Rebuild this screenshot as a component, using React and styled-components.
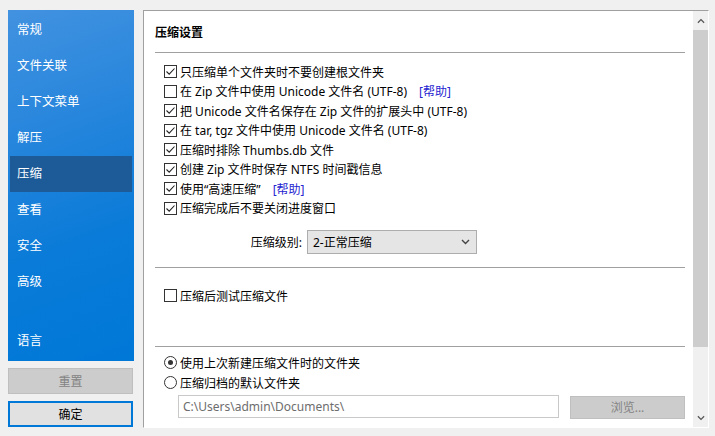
import React from 'react'
import styled, { createGlobalStyle } from 'styled-components'

const GlobalStyle = createGlobalStyle`
    body {
        margin: 0;
        background: #f0f0f0;
        font-family: "Noto Sans", "Noto Sans CJK SC", sans-serif;
        font-size: 12px;
        color: #000;
    }
`

const Window = styled.div`
    box-sizing: border-box;
    display: flex;
    width: 715px;
    height: 436px;
    padding: 10px 6px 8px 8px;
    background: #f0f0f0;
`

const LeftCol = styled.div`
    display: flex;
    flex-direction: column;
    width: 126px;
`

const Sidebar = styled.nav`
    display: flex;
    flex-direction: column;
    height: 351px;
    padding: 2px 2px 2px;
    box-sizing: border-box;
    background: linear-gradient(160deg, #4292e0 0%, #2585dc 35%, #0a7bd8 65%, #0078d7 100%);
`

const NavItem = styled.div`
    height: 36px;
    line-height: 36px;
    padding-left: 7px;
    color: #fff;
    font-size: 12.5px;
    background: ${p => (p.active ? '#1d5b98' : 'transparent')};
    margin-top: ${p => (p.push ? 'auto' : '0')};
`

const SideButton = styled.button`
    box-sizing: border-box;
    height: 26px;
    margin-top: 7px;
    width: 125px;
    font-family: inherit;
    font-size: 12px;
    background: ${p => (p.primary ? '#e1e1e1' : '#cccccc')};
    border: ${p => (p.primary ? '2px solid #0078d7' : '1px solid #bfbfbf')};
    color: ${p => (p.primary ? '#000' : '#838383')};
    padding: 0;
`

const Panel = styled.section`
    box-sizing: border-box;
    display: flex;
    width: 566px;
    height: 418px;
    margin-left: 9px;
    border-top: 1px solid #a0a0a0;
    border-left: 1px solid #a0a0a0;
    border-right: 1px solid #fff;
    border-bottom: 1px solid #fff;
    background: #fff;
`

const Content = styled.div`
    flex: 1;
    padding: 0 8px 0 11px;
`

const Title = styled.div`
    font-weight: 700;
    line-height: 16px;
    padding: 14px 0 11px;
    border-bottom: 1px solid #a0a0a0;
`

const Group = styled.div`
    padding-left: 9px;
    margin-top: ${p => p.top || 0}px;
`

const Row = styled.div`
    display: flex;
    align-items: center;
    height: ${p => p.h || 19.5}px;
    white-space: nowrap;
`

const Box = styled.span`
    box-sizing: border-box;
    display: inline-flex;
    align-items: center;
    justify-content: center;
    width: 13px;
    height: 13px;
    border: 1px solid #333;
    background: #fff;
    margin-right: 3px;
    flex: none;
`

const Radio = styled(Box)`
    border-radius: 50%;

    &::after {
        content: '';
        display: ${p => (p.on ? 'block' : 'none')};
        width: 5px;
        height: 5px;
        border-radius: 50%;
        background: #333;
    }
`

const Link = styled.span`
    color: #2525d0;
    margin-left: 12px;
`

const Divider = styled.div`
    border-top: 1px solid #a0a0a0;
    margin-top: ${p => p.top}px;
`

const LevelRow = styled.div`
    display: flex;
    align-items: center;
    margin-top: 12px;
`

const LevelLabel = styled.span`
    width: 147px;
    text-align: right;
    margin-right: 5px;
`

const Combo = styled.div`
    box-sizing: border-box;
    display: flex;
    align-items: center;
    justify-content: space-between;
    width: 170px;
    height: 24px;
    padding: 0 6px 0 5px;
    background: #e5e5e5;
    border: 1px solid #adadad;
`

const PathRow = styled.div`
    display: flex;
    align-items: center;
    padding-left: 23px;
    margin-top: 1px;
`

const PathInput = styled.div`
    box-sizing: border-box;
    width: 381px;
    height: 23px;
    line-height: 21px;
    padding-left: 4px;
    border: 1px solid #c9c9c9;
    color: #6d6d6d;
`

const Browse = styled.div`
    box-sizing: border-box;
    width: 115px;
    height: 23px;
    line-height: 21px;
    margin-left: 11px;
    margin-top: 2px;
    text-align: center;
    background: #cccccc;
    border: 1px solid #bfbfbf;
    color: #838383;
`

const Scrollbar = styled.div`
    display: flex;
    flex-direction: column;
    align-items: center;
    width: 17px;
    background: #f0f0f0;
`

const Arrow = styled.div`
    display: flex;
    align-items: center;
    justify-content: center;
    height: 19px;
    flex: none;
`

const Thumb = styled.div`
    width: 15px;
    height: 317px;
    background: #cdcdcd;
`

const Spacer = styled.div`
    flex: 1;
`

const Check = ({ on }) => (
    <Box>
        {on && (
            <svg width="11" height="11" viewBox="0 0 11 11">
                <path d="M1.5 5.5 L4.2 8.2 L9.5 2.5" fill="none" stroke="#222" strokeWidth="1.1" />
            </svg>
        )}
    </Box>
)

const Chevron = ({ up, color = '#555', w = 9 }) => (
    <svg width={w} height="6" viewBox="0 0 9 6">
        <path d={up ? 'M1 5 L4.5 1.5 L8 5' : 'M1 1 L4.5 4.5 L8 1'} fill="none" stroke={color} strokeWidth="1.4" />
    </svg>
)

const nav = ['常规', '文件关联', '上下文菜单', '解压', '压缩', '查看', '安全', '高级']

const options = [
    { on: true, text: '只压缩单个文件夹时不要创建根文件夹' },
    { on: false, text: '在 Zip 文件中使用 Unicode 文件名 (UTF-8)', help: true },
    { on: true, text: '把 Unicode 文件名保存在 Zip 文件的扩展头中 (UTF-8)' },
    { on: true, text: '在 tar, tgz 文件中使用 Unicode 文件名 (UTF-8)' },
    { on: true, text: '压缩时排除 Thumbs.db 文件' },
    { on: true, text: '创建 Zip 文件时保存 NTFS 时间戳信息' },
    { on: true, text: '使用“高速压缩”', help: true },
    { on: true, text: '压缩完成后不要关闭进度窗口' },
]

const App = () => (
    <Window>
        <GlobalStyle />
        <LeftCol>
            <Sidebar>
                {nav.map(n => (
                    <NavItem key={n} active={n === '压缩'}>{n}</NavItem>
                ))}
                <NavItem push>语言</NavItem>
            </Sidebar>
            <SideButton>重置</SideButton>
            <SideButton primary>确定</SideButton>
        </LeftCol>
        <Panel>
            <Content>
                <Title>压缩设置</Title>
                <Group top={9}>
                    {options.map(o => (
                        <Row key={o.text}>
                            <Check on={o.on} />
                            {o.text}
                            {o.help && <Link>[帮助]</Link>}
                        </Row>
                    ))}
                </Group>
                <LevelRow>
                    <LevelLabel>压缩级别:</LevelLabel>
                    <Combo>
                        2-正常压缩
                        <Chevron color="#444" />
                    </Combo>
                </LevelRow>
                <Divider top={13} />
                <Group top={18}>
                    <Row>
                        <Check on={false} />
                        压缩后测试压缩文件
                    </Row>
                </Group>
                <Divider top={40} />
                <Group top={6}>
                    <Row h={20}>
                        <Radio on />
                        使用上次新建压缩文件时的文件夹
                    </Row>
                    <Row h={20}>
                        <Radio />
                        压缩归档的默认文件夹
                    </Row>
                </Group>
                <PathRow>
                    <PathInput>C:\Users\admin\Documents\</PathInput>
                    <Browse>浏览...</Browse>
                </PathRow>
            </Content>
            <Scrollbar>
                <Arrow><Chevron up w={8} /></Arrow>
                <Thumb />
                <Spacer />
                <Arrow><Chevron w={8} /></Arrow>
            </Scrollbar>
        </Panel>
    </Window>
)

export default App
